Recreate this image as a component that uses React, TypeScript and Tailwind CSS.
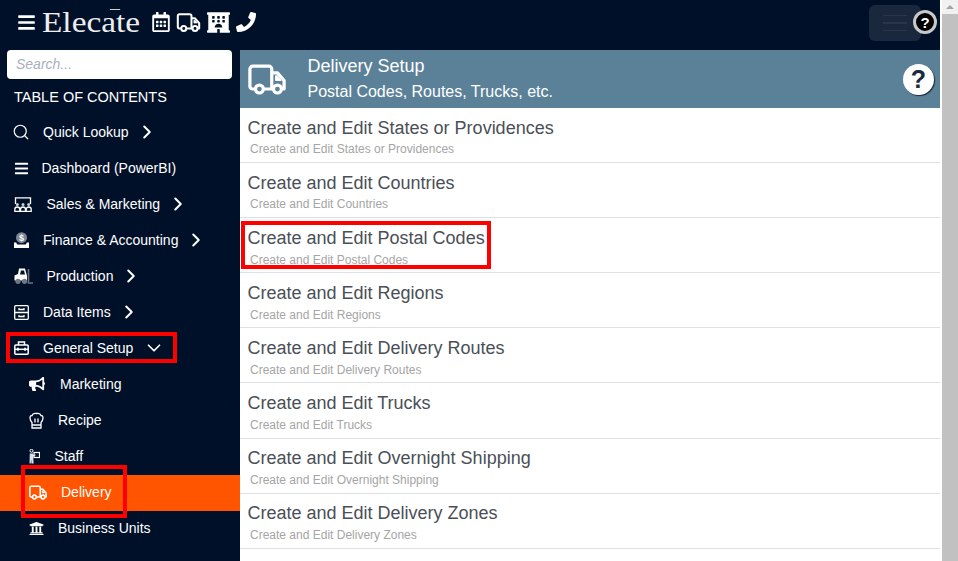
import { ChevronDown, ChevronRight, Search } from "lucide-react";
import { FaBars, FaBullhorn, FaHotel, FaPhone, FaRegCalendarAlt, FaUniversity } from "react-icons/fa";
import type { ReactNode } from "react";

function Truck({ className }: { className: string }) {
  return (
    <svg viewBox="0 0 40 32" fill="none" stroke="currentColor" strokeWidth="3.4" strokeLinejoin="round" className={className}>
      <path d="M7 26H5a3 3 0 0 1-3-3V5a3 3 0 0 1 3-3h17a3 3 0 0 1 3 3v21H17" />
      <path d="M25 9h6l7 8v9h-2" />
      <path d="M25 26h1" />
      <circle cx="12" cy="26" r="4.2" />
      <circle cx="31" cy="26" r="4.2" />
      <path d="M29 12h2l4 5h-6z" fill="currentColor" strokeWidth="1" />
    </svg>
  );
}

function SalesIcon() {
  return (
    <svg viewBox="0 0 18 15" fill="none" stroke="currentColor" strokeWidth="1.3" className="h-[15px] w-[18px]">
      <path d="M1.5 7V.8h15V7" />
      <circle cx="3.3" cy="7.5" r="1.5" fill="#c9ced6" stroke="none" />
      <circle cx="9" cy="7.5" r="1.5" fill="#c9ced6" stroke="none" />
      <circle cx="14.7" cy="7.5" r="1.5" fill="#c9ced6" stroke="none" />
      <path d="M.8 14.5v-2a2.4 2.4 0 0 1 5 0v2zM6.5 14.5v-2a2.4 2.4 0 0 1 5 0v2zM12.2 14.5v-2a2.4 2.4 0 0 1 5 0v2z" />
    </svg>
  );
}

function FinanceIcon() {
  return (
    <svg viewBox="0 0 15 16" className="h-[16px] w-[15px]">
      <circle cx="7.5" cy="5.7" r="5.5" fill="#7d8694" />
      <path d="M0 10.5h2.2l1 2h8.600l1-2H15V16H0z" fill="#fff" />
      <text x="7.5" y="9" textAnchor="middle" fontSize="9" fontWeight="700" fontFamily="Liberation Sans" fill="#fff">$</text>
    </svg>
  );
}

function ForkliftIcon() {
  return (
    <svg viewBox="0 0 19 16" className="h-[16px] w-[19px]">
      <path d="M5 .5h6l2 7.5v4.5H.5V7.500L4 6z" fill="#fff" />
      <path d="M7 2.500h3l1 4H6z" fill="#001029" />
      <circle cx="4" cy="13.3" r="2.6" fill="#6f7885" />
      <circle cx="10.5" cy="13.3" r="2.6" fill="#6f7885" />
      <path d="M14.5 1v14H19" stroke="#6a7483" strokeWidth="1.6" fill="none" />
    </svg>
  );
}

function CabinetIcon() {
  return (
    <svg viewBox="0 0 15 15" fill="none" stroke="currentColor" strokeWidth="1.3" className="h-[15px] w-[15px]">
      <rect x=".7" y=".7" width="13.6" height="13.6" rx="1" />
      <path d="M.7 7.500h13.600M5 3v1.500h5V3M5 10v1.500h5V10" />
    </svg>
  );
}

function ToolboxIcon() {
  return (
    <svg viewBox="0 0 15 14" fill="none" stroke="currentColor" strokeWidth="1.5" className="h-[14px] w-[15px]">
      <path d="M4.5 4V1h6v3" />
      <rect x=".8" y="4" width="13.4" height="9.2" rx="1" />
      <path d="M.8 8.300h13.400" />
      <path d="M4 6.800v3M11 6.800v3" strokeWidth="1.8" />
    </svg>
  );
}

function ChefIcon() {
  return (
    <svg viewBox="0 0 15 17" fill="none" stroke="currentColor" strokeWidth="1.3" className="h-[17px] w-[15px]">
      <path d="M3 10.500C.5 8 .2 3.500 3 3.500 4 .6 5.500 1.500 7.500 1.500S11 .6 12 3.500c2.800 0 2.500 4.500 0 7V16H3z" />
      <path d="M3 13h9M6 6.500v4M9 6.500v4" />
    </svg>
  );
}

function StaffIcon() {
  return (
    <svg viewBox="0 0 11 15" className="h-[15px] w-[11px]">
      <circle cx="2.5" cy="1.8" r="1.5" fill="none" stroke="#fff" strokeWidth="1" />
      <path d="M.8 4.500h3.200l.6 10H2.500l-.4-4-.3 4H.5z" fill="#dbe1ea" />
      <rect x="5" y="3.5" width="5.5" height="5" fill="none" stroke="#fff" strokeWidth="1.2" />
      <path d="M3.500 7L6.500 6" stroke="#fff" strokeWidth="1" />
    </svg>
  );
}

type NavItem = {
  label: string;
  icon: ReactNode;
  iconBox: string;
  chevron?: "right" | "down";
  active?: boolean;
  sub?: boolean;
};

const items: NavItem[] = [
  { label: "Quick Lookup", icon: <Search size={18} strokeWidth={1.6} className="-ml-[2px]" />, iconBox: "w-[29px]", chevron: "right" },
  { label: "Dashboard (PowerBI)", icon: <FaBars size={15} />, iconBox: "w-[27.5px]" },
  { label: "Sales & Marketing", icon: <SalesIcon />, iconBox: "w-[32.5px]", chevron: "right" },
  { label: "Finance & Accounting", icon: <FinanceIcon />, iconBox: "w-[29px]", chevron: "right" },
  { label: "Production", icon: <ForkliftIcon />, iconBox: "w-[32.5px]", chevron: "right" },
  { label: "Data Items", icon: <CabinetIcon />, iconBox: "w-[29px]", chevron: "right" },
  { label: "General Setup", icon: <ToolboxIcon />, iconBox: "w-[29px]", chevron: "down" },
  { label: "Marketing", icon: <FaBullhorn size={16} />, iconBox: "w-[31px]", sub: true },
  { label: "Recipe", icon: <ChefIcon />, iconBox: "w-[29px]", sub: true },
  { label: "Staff", icon: <StaffIcon />, iconBox: "w-[25.5px]", sub: true },
  { label: "Delivery", icon: <Truck className="h-[15px] w-[18px]" />, iconBox: "w-[32px]", sub: true, active: true },
  { label: "Business Units", icon: <FaUniversity size={15} />, iconBox: "w-[29px]", sub: true },
];

const rows = [
  "States or Providences",
  "Countries",
  "Postal Codes",
  "Regions",
  "Delivery Routes",
  "Trucks",
  "Overnight Shipping",
  "Delivery Zones",
];

export default function App() {
  return (
    <div className="relative flex h-[561px] w-[958px] overflow-hidden bg-white font-['Liberation_Sans',Arial,sans-serif]">
      <div className="flex w-[940px] flex-col">
        <header className="relative flex h-[50px] items-center bg-[#001029] pb-[6px] pl-[17px] text-white">
          <FaBars size={19} />
          <span className="relative ml-[6px] w-[99px] origin-left scale-x-[1.15] font-['Liberation_Serif',serif] text-[29px] leading-none text-[#eeeeee]">
            Elecate
            <span className="absolute left-[59px] top-[1px] h-px w-[9px] bg-[#cccccc]" />
          </span>
          <span className="ml-[10px] flex items-center">
            <FaRegCalendarAlt size={20} />
            <Truck className="ml-[5px] h-[19px] w-[25px]" />
            <FaHotel size={23} className="ml-[6px]" />
            <FaPhone size={20} className="ml-[6px]" />
          </span>
          <div className="absolute left-[869px] top-[5px] flex h-[36px] w-[52px] flex-col items-center justify-center gap-[6px] rounded-md bg-[#1a283e]">
            <span className="h-[1.5px] w-[24px] bg-[#2a3648]" />
            <span className="h-[1.5px] w-[24px] bg-[#2a3648]" />
            <span className="h-[1.5px] w-[24px] bg-[#2a3648]" />
          </div>
          <div className="absolute left-[913px] top-[10px] flex h-[24px] w-[24px] items-center justify-center rounded-full border-[3px] border-[#c8c8c8] bg-black text-[15px] font-bold leading-none text-white">
            ?
          </div>
        </header>

        <div className="flex min-h-0 flex-1">
          <aside className="flex w-[240px] flex-none flex-col bg-[#001029] text-white">
            <div className="mx-[7px] flex h-[29px] w-[225px] items-center rounded-[4px] bg-white px-[9px] text-[14px] italic text-[#a8b0bd]">
              Search...
            </div>
            <div className="mt-[9px] pl-[14px] text-[14.5px] leading-[18px]">TABLE OF CONTENTS</div>
            <nav className="mt-[9px] flex flex-col">
              {items.map((item) => (
                <div
                  key={item.label}
                  className={`flex h-[36px] items-center pb-[2px] text-[14px] ${item.sub ? "pl-[29px]" : "pl-[14px]"} ${item.active ? "bg-[#ff5500]" : ""}`}
                >
                  <span className={`flex flex-none items-center ${item.iconBox}`}>{item.icon}</span>
                  <span>{item.label}</span>
                  {item.chevron === "right" && <ChevronRight size={22} strokeWidth={2.2} className="ml-[7px]" />}
                  {item.chevron === "down" && <ChevronDown size={22} strokeWidth={1.9} className="ml-[10px]" />}
                </div>
              ))}
            </nav>
          </aside>

          <main className="flex min-w-0 flex-1 flex-col">
            <div className="flex h-[58px] flex-none items-center bg-[#5b8199] pl-[8px] pr-[6px] text-white">
              <Truck className="h-[33px] w-[38px]" />
              <div className="ml-[21.5px] flex-1">
                <div className="text-[18px] leading-[25px]">Delivery Setup</div>
                <div className="text-[16px] leading-[25px]">Postal Codes, Routes, Trucks, etc.</div>
              </div>
              <div className="flex h-[31px] w-[31px] items-center justify-center rounded-full bg-white text-[25px] font-bold leading-none text-[#1b2a3d] shadow-[1px_1px_1px_#1b2a3d]">
                ?
              </div>
            </div>
            {rows.map((row) => (
              <div key={row} className="flex h-[55.1px] flex-none flex-col border-b border-[#dde1e6] pl-[7.5px]">
                <div className="mt-[8.75px] text-[18px] leading-[22px] text-[#4a4f57]">Create and Edit {row}</div>
                <div className="ml-[2.5px] mt-[3.6px] text-[12px] leading-[14px] text-[#a5a5a5]">Create and Edit {row}</div>
              </div>
            ))}
          </main>
        </div>
      </div>

      <div className="ml-[2px] flex w-[16px] flex-none flex-col bg-[#f1f1f1]">
        <div className="flex h-[14px] items-center justify-center">
          <span className="h-0 w-0 border-x-[4px] border-b-[4px] border-x-transparent border-b-[#a3a3a3]" />
        </div>
        <div className="flex-1 bg-[#c1c1c1]" />
      </div>

      <div className="absolute left-[6px] top-[332px] h-[31px] w-[171px] border-[4px] border-[#ff0000]" />
      <div className="absolute left-[21px] top-[465px] h-[53px] w-[106px] border-[4px] border-[#ff0000]" />
      <div className="absolute left-[241px] top-[221px] h-[48px] w-[250px] border-[4px] border-[#ff0000]" />
    </div>
  );
}
